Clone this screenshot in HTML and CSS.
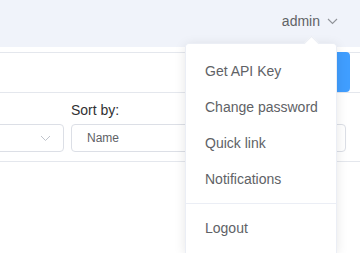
FILE: index.html
```html
<!DOCTYPE html>
<html>
	<head>
		<meta charset="UTF-8">
		<title>admin</title>
		<link rel="stylesheet" href="styles.css">
	</head>
	<body>
		<header class="top">
			<div class="user">
				<span>admin</span>
				<svg class="caret" width="11" height="7" viewBox="0 0 11 7"><path d="M1 1l4.5 4.5L10 1" fill="none" stroke="#909399" stroke-width="1.1"/></svg>
			</div>
		</header>
		<section class="panel">
			<div class="toolbar">
				<span class="btn"></span>
			</div>
			<div class="filters">
				<div class="group first">
					<label>Status:</label>
					<div class="select">
						<span></span>
						<svg width="11" height="7" viewBox="0 0 11 7"><path d="M1 1l4.5 4.5L10 1" fill="none" stroke="#c0c4cc" stroke-width="1"/></svg>
					</div>
				</div>
				<div class="group second">
					<label>Sort by:</label>
					<div class="select">
						<span>Name</span>
					</div>
				</div>
			</div>
		</section>
		<ul class="menu">
			<li>Get API Key</li>
			<li>Change password</li>
			<li>Quick link</li>
			<li>Notifications</li>
			<li class="sep"></li>
			<li>Logout</li>
		</ul>
	</body>
</html>
```
FILE: styles.css
```css
body{
	margin: 0;
	background: #fff;
	font-family: "Liberation Sans", Arial, sans-serif;
	font-size: 14px;
	color: #606266;
	overflow: hidden;
}
.top{
	height: 47px;
	background: #f0f3fa;
	display: flex;
	justify-content: flex-end;
}
.user{
	display: flex;
	align-items: center;
	height: 42px;
	padding-right: 22px;
	color: #606266;
}
.caret{
	margin-left: 7px;
}
.panel{
	margin-top: 5px;
	border-top: 1px solid #e4e7ed;
}
.toolbar{
	height: 39px;
	border-bottom: 1px solid #e4e7ed;
	display: flex;
	justify-content: flex-end;
	padding-right: 10px;
}
.btn{
	display: block;
	width: 40px;
	height: 40px;
	margin-top: -1px;
	background: #409eff;
	border-radius: 4px;
}
.filters{
	display: flex;
	gap: 7px;
	padding: 7px 0 9px 0;
	border-bottom: 1px solid #e4e7ed;
}
.group label{
	display: block;
	height: 20px;
	line-height: 20px;
	margin-bottom: 4px;
	color: #303133;
}
.first{
	width: 124px;
	margin-left: -60px;
}
.first label{
	visibility: hidden;
}
.second{
	width: 275px;
}
.select{
	height: 26px;
	border: 1px solid #dcdfe6;
	border-radius: 4px;
	display: flex;
	align-items: center;
	justify-content: space-between;
	padding: 0 12px 0 15px;
	font-size: 12px;
	color: #606266;
}
.menu{
	position: absolute;
	left: 185px;
	top: 43px;
	width: 152px;
	height: 210px;
	margin: 0;
	padding: 9px 0 0 0;
	list-style: none;
	background: #fff;
	border: 1px solid #ebeef5;
	border-bottom: 0;
	border-radius: 4px 4px 0 0;
	box-shadow: 0 2px 12px rgba(0,0,0,.1);
	box-sizing: border-box;
}
.menu::before{
	content: "";
	position: absolute;
	top: -6px;
	left: 120px;
	width: 10px;
	height: 10px;
	background: #fff;
	border-top: 1px solid #ebeef5;
	border-left: 1px solid #ebeef5;
	transform: rotate(45deg);
}
.menu li{
	height: 36px;
	line-height: 36px;
	padding-left: 19px;
	color: #606266;
}
.menu .sep{
	height: 0;
	margin: 6px 0;
	border-top: 1px solid #ebeef5;
}
```
